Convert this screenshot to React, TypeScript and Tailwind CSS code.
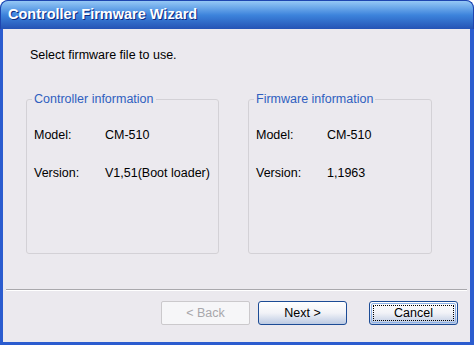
import React from "react";

interface InfoRow {
  label: string;
  value: string;
}

const controllerInfo: InfoRow[] = [
  { label: "Model:", value: "CM-510" },
  { label: "Version:", value: "V1,51(Boot loader)" },
];

const firmwareInfo: InfoRow[] = [
  { label: "Model:", value: "CM-510" },
  { label: "Version:", value: "1,1963" },
];

function GroupBox({ title, rows, width }: { title: string; rows: InfoRow[]; width: string }) {
  return (
    <fieldset className={`${width} h-[162px] rounded-[3px] border border-[#d3d1d6] pl-[7px]`}>
      <legend className="-ml-[2px] px-[2px] text-[#2f5fc0] leading-[14px]">{title}</legend>
      <div className="mt-[22px] flex flex-col gap-[24px]">
        {rows.map((r) => (
          <div key={r.label} className="flex leading-[14px]">
            <span className="w-[71px]">{r.label}</span>
            <span>{r.value}</span>
          </div>
        ))}
      </div>
    </fieldset>
  );
}

function Button({ label, disabled, focused }: { label: string; disabled?: boolean; focused?: boolean }) {
  if (disabled) {
    return (
      <div className="w-[89px] h-[24px] rounded-[2px] border border-[#cbc9cc] bg-[#f6f6f8] flex items-center justify-center text-[#a8a7ab]">
        {label}
      </div>
    );
  }
  return (
    <div className="w-[89px] h-[24px] rounded-[3px] border border-[#1c4b95] bg-gradient-to-b from-[#ffffff] via-[#f1f2f7] to-[#bccae2] p-[1px]">
      <div
        className={`w-full h-full flex items-center justify-center rounded-[2px] ${
          focused ? "border border-[#8db2e8] outline outline-1 outline-dotted outline-[#000] -outline-offset-[3px]" : ""
        } text-black`}
      >
        {label}
      </div>
    </div>
  );
}

export default function App() {
  return (
    <div
      className="w-[474px] h-[345px] flex flex-col rounded-t-[8px] overflow-hidden bg-[#2b5ccf] text-[12.5px] text-black"
      style={{ fontFamily: '"Liberation Sans", Arial, sans-serif' }}
    >
      <div className="h-[29px] shrink-0 rounded-t-[8px] border border-b-0 border-[#1e46b0] bg-gradient-to-b from-[#95c8f5] via-[#3d84dc] to-[#2553b5] flex items-center pl-[7px]">
        <span className="text-white font-bold text-[14.5px] [text-shadow:1px_1px_0_#0c2a80]">
          Controller Firmware Wizard
        </span>
      </div>
      <div className="flex-1 flex flex-col bg-[#ebe9ee] ml-[3px] mr-[4px] mb-[3px]">
        <p className="mt-[19px] ml-[27px] leading-[14px]">Select firmware file to use.</p>
        <div className="mt-[30px] ml-[23px] flex gap-[29px]">
          <GroupBox title="Controller information" rows={controllerInfo} width="w-[193px]" />
          <GroupBox title="Firmware information" rows={firmwareInfo} width="w-[184px]" />
        </div>
        <div className="mt-[35px] mx-[3px] border-t border-[#a9a8ac] border-b border-b-white" />
        <div className="mt-[10px] flex justify-end pr-[12px]">
          <Button label="< Back" disabled />
          <div className="w-[8px]" />
          <Button label="Next >" />
          <div className="w-[22px]" />
          <Button label="Cancel" focused />
        </div>
      </div>
    </div>
  );
}
